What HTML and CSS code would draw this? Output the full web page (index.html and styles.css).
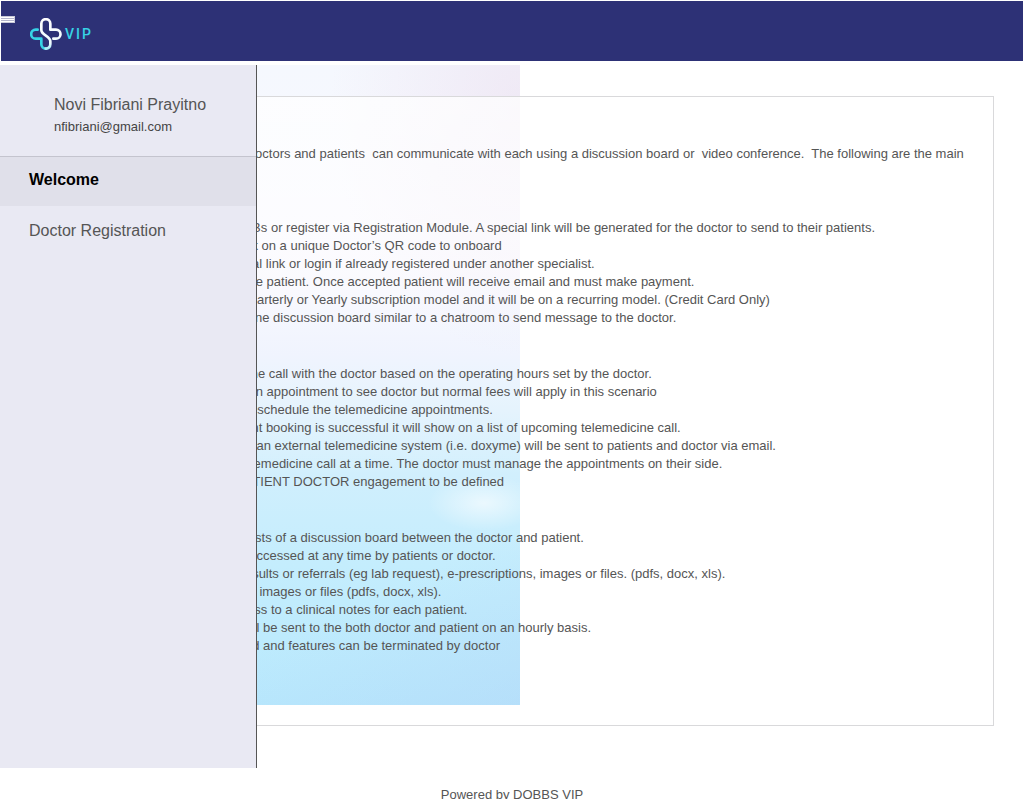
FILE: index.html
```html
<!DOCTYPE html>
<html lang="en">
<head>
<meta charset="utf-8">
<meta name="viewport" content="width=device-width, initial-scale=1">
<title>DOBBS VIP</title>
<link rel="stylesheet" href="styles.css">
</head>
<body>
<header class="topbar">
  <button class="menu-toggle" type="button" aria-label="Toggle menu"><span></span><span></span></button>
  <a class="brand" href="#">
    <svg class="brand-mark" viewBox="0 0 96 96" fill="none" stroke-width="8" stroke-linecap="round" stroke-linejoin="round" aria-hidden="true">
      <defs>
        <linearGradient id="cross" x1="0" y1="0" x2="0" y2="1">
          <stop offset="0" stop-color="#ffffff"/>
          <stop offset=".8" stop-color="#f1fbff"/>
          <stop offset="1" stop-color="#a8ecf5"/>
        </linearGradient>
      </defs>
      <path stroke="#37d3e6" d="M23 35H17A13 13 0 0 0 17 62H34V79A13 13 0 0 0 47 92"/>
      <path stroke="url(#cross)" d="M47 92A13 13 0 0 0 61 79V70C61 54 34 52 34 36V17A13.500 13.500 0 0 1 61 17V35H78A13 13 0 0 1 78 62H70"/>
    </svg>
    <span class="brand-name">VIP</span>
  </a>
</header>
<div class="stage">
  <aside class="sidebar">
    <div class="user">
      <div class="user-name">Novi Fibriani Prayitno</div>
      <div class="user-mail">nfibriani@gmail.com</div>
    </div>
    <nav class="nav">
      <a class="nav-link active" href="#">Welcome</a>
      <a class="nav-link" href="#">Doctor Registration</a>
    </nav>
  </aside>
  <main class="card">
    <p>DOBBS VIP is a platform where doctors and patients&nbsp; can communicate with each using a discussion board or&nbsp; video conference.&nbsp; The following are the main</p>
    <h2>Registration</h2>
    <ul>
      <li>Doctors onboard via DOBBs or register via Registration Module. A special link will be generated for the doctor to send to their patients.</li>
      <li>Patients must scan or click on a unique Doctor’s QR code to onboard</li>
      <li>Patients register via special link or login if already registered under another specialist.</li>
      <li>Doctors will then accept the patient. Once accepted patient will receive email and must make payment.</li>
      <li>Payments are Monthly, Quarterly or Yearly subscription model and it will be on a recurring model. (Credit Card Only)</li>
      <li>Patients get access to online discussion board similar to a chatroom to send message to the doctor.</li>
    </ul>
    <h2>Telemedicine</h2>
    <ul>
      <li>Patients select telemedicine call with the doctor based on the operating hours set by the doctor.</li>
      <li>Patients could also book an appointment to see doctor but normal fees will apply in this scenario</li>
      <li>Doctors would accept and schedule the telemedicine appointments.</li>
      <li>When the new appointment booking is successful it will show on a list of upcoming telemedicine call.</li>
      <li>Meeting address link from an external telemedicine system (i.e. doxyme) will be sent to patients and doctor via email.</li>
      <li>Patients may have one telemedicine call at a time. The doctor must manage the appointments on their side.</li>
      <li>Additional rules for the PATIENT DOCTOR engagement to be defined</li>
    </ul>
    <h2>Discussion Board</h2>
    <ul>
      <li>The patient program consists of a discussion board between the doctor and patient.</li>
      <li>This discussion could be accessed at any time by patients or doctor.</li>
      <li>Doctors can attach any results or referrals (eg lab request), e-prescriptions, images or files. (pdfs, docx, xls).</li>
      <li>Patients could also upload images or files (pdfs, docx, xls).</li>
      <li>Doctor will also have access to a clinical notes for each patient.</li>
      <li>Email notification alerts will be sent to the both doctor and patient on an hourly basis.</li>
      <li>The main discussion board and features can be terminated by doctor</li>
    </ul>
  </main>
</div>
<footer class="footer">Powered by DOBBS VIP</footer>
</body>
</html>
```

FILE: styles.css
```css
* { box-sizing: border-box; }

body {
  margin: 0;
  background: #fff;
  color: #555;
  font: 13px/18px "Liberation Sans", Arial, sans-serif;
}

.topbar {
  position: relative;
  display: flex;
  align-items: center;
  height: 60px;
  margin: 1px 1px 4px;
  padding: 6px 29px 0;
  background: #2d3176;
}

.menu-toggle {
  position: absolute;
  top: 15px;
  left: 0;
  display: flex;
  flex-direction: column;
  justify-content: space-evenly;
  width: 14px;
  height: 7px;
  padding: 0;
  border: 1px solid #c9cad9;
  border-left: 0;
  background: #fff;
}

.menu-toggle span {
  height: 1px;
  background: #b4b5cc;
}

.brand {
  display: flex;
  align-items: center;
  gap: 3px;
  color: #37d3e6;
  text-decoration: none;
}

.brand-mark {
  width: 32px;
  height: 32px;
}

.brand-name {
  font: 500 14px/18px Roboto, sans-serif;
  letter-spacing: 2px;
}

.stage {
  position: relative;
  padding: 31px 30px 42px;
  background-image:
    radial-gradient(ellipse 56px 28px at 484px 438px, rgba(255, 255, 255, .6), transparent),
    linear-gradient(155deg, transparent 80%, rgba(178, 208, 246, .4)),
    radial-gradient(ellipse 190px 250px at 520px 40px, rgba(232, 215, 234, .45), transparent),
    linear-gradient(#f5f8fe 0, #f8f7fe 200px, #edf2fe 290px, #e2f2fd 345px, #d0effd 410px, #c4edfd 500px, #b8e9fd 640px);
  background-size: 520px 640px;
  background-repeat: no-repeat;
}

.card {
  padding: 48px 28px 70px 30px;
  border: 1px solid #d9d9db;
  background: linear-gradient(rgba(255, 255, 255, .75) 0, rgba(255, 255, 255, .6) 140px, rgba(255, 255, 255, .2) 240px, rgba(255, 255, 255, 0) 400px);
}

.card p {
  margin: 0 0 28px;
}

.card h2 {
  margin: 10px 0;
  font-size: 13px;
  line-height: 18px;
}

.card ul {
  margin: 0;
  padding-left: 43px;
}

.sidebar {
  position: absolute;
  top: 0;
  bottom: 0;
  left: 0;
  width: 257px;
  border-right: 1px solid #555;
  background: #e9e9f3;
}

.user {
  padding: 28px 20px 20px 54px;
  border-bottom: 1px solid #c4c4ce;
}

.user-name {
  font-size: 16px;
  line-height: 24px;
}

.user-mail {
  line-height: 19px;
  color: #444;
}

.nav-link {
  display: block;
  padding: 13px 29px;
  color: #555;
  font-size: 16px;
  line-height: 24px;
  text-decoration: none;
}

.nav-link.active {
  padding-top: 11px;
  padding-bottom: 14px;
  background: #e0e0ea;
  color: #000;
  font-weight: 700;
}

.footer {
  padding: 18px 0;
  text-align: center;
}
```
